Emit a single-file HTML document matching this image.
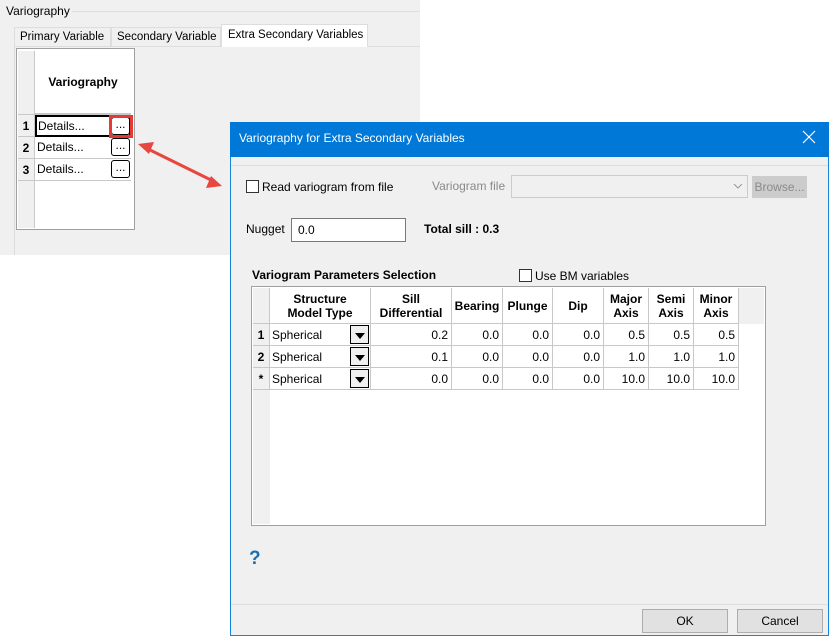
<!DOCTYPE html>
<html><head><meta charset="utf-8"><style>
*{box-sizing:border-box;margin:0;padding:0}
body{width:831px;height:642px;background:#fff;position:relative;overflow:hidden;font-family:"Liberation Sans",sans-serif;font-size:12px;color:#000}
.a{position:absolute;white-space:nowrap}
.panel{left:0;top:0;width:420px;height:255px;background:#f0f0f0}
.c{position:absolute;border-right:1px solid #c8c8c8;border-bottom:1px solid #c8c8c8;display:flex;align-items:center;white-space:nowrap}
.h{font-weight:bold;justify-content:center;text-align:center;line-height:14px;background:#fff}
.rh{background:#f0f0f0;font-weight:bold;justify-content:center}
.n{justify-content:flex-end;padding-right:3px;background:#fff}
.dd{position:absolute;width:19px;height:19px;border:1px solid #000;background:#f0f0f0}
.dd:after{content:"";position:absolute;left:4px;top:7px;border-left:5px solid transparent;border-right:5px solid transparent;border-top:6px solid #000}
.btn{position:absolute;border:1px solid #adadad;background:#e1e1e1;display:flex;align-items:center;justify-content:center}
.cb{position:absolute;width:13px;height:13px;border:1px solid #333;background:#fff}
.tab{font-size:11.5px}
</style></head><body>
<div class="a panel"></div>
<div class="a" style="left:6px;top:4px;font-size:12px">Variography</div>
<div class="a" style="left:72px;top:11px;width:348px;border-top:1px solid #ddd"></div>
<div class="a" style="left:14px;top:46px;width:406px;border-top:1px solid #ddd"></div>
<div class="a" style="left:14px;top:46px;height:209px;border-left:1px solid #ddd"></div>
<div class="a tab" style="left:14px;top:27px;width:97px;height:20px;border:1px solid #ddd;background:#f0f0f0;padding:3px 0 0 5px">Primary Variable</div>
<div class="a tab" style="left:111px;top:27px;width:110px;height:20px;border:1px solid #ddd;background:#f0f0f0;padding:3px 0 0 5px">Secondary Variable</div>
<div class="a tab" style="left:221px;top:24px;width:147px;height:23px;border:1px solid #ddd;border-bottom:none;background:#fff;padding:4px 0 0 6px">Extra Secondary Variables</div>
<div class="a" style="left:16px;top:48px;width:119px;height:182px;border:1px solid #a0a0a0;background:#fff"></div>
<div class="a" style="left:18px;top:51px;width:17px;height:177px;background:#f0f0f0;border-right:1px solid #c8c8c8"></div>
<div class="c h" style="left:35px;top:51px;width:96px;height:63px;border-right:none">Variography</div>
<div class="a" style="left:18px;top:114px;width:113px;border-top:1px solid #c8c8c8"></div>
<div class="c rh" style="left:18px;top:115px;width:17px;height:22px">1</div>
<div class="c rh" style="left:18px;top:137px;width:17px;height:22px">2</div>
<div class="c rh" style="left:18px;top:159px;width:17px;height:22px">3</div>
<div class="a" style="left:35px;top:115px;width:96px;height:22px;border:2px solid #000;padding:2px 0 0 1px">Details...</div>
<div class="a" style="left:37px;top:140px">Details...</div>
<div class="a" style="left:37px;top:162px">Details...</div>
<div class="a" style="left:35px;top:158px;width:96px;border-top:1px solid #c8c8c8"></div>
<div class="a" style="left:35px;top:180px;width:96px;border-top:1px solid #c8c8c8"></div>
<div class="a" style="left:111px;top:117px;width:19px;height:18px;border:1px solid #000;border-radius:3px;text-align:center;line-height:13px">...</div>
<div class="a" style="left:111px;top:138px;width:19px;height:18px;border:1px solid #000;border-radius:3px;text-align:center;line-height:13px">...</div>
<div class="a" style="left:111px;top:160px;width:19px;height:18px;border:1px solid #000;border-radius:3px;text-align:center;line-height:13px">...</div>
<div class="a" style="left:109px;top:115px;width:24px;height:23px;border:3px solid #e53935"></div>
<svg class="a" style="left:0;top:0" width="831" height="642"><line x1="148" y1="149" x2="213" y2="181" stroke="#e8473f" stroke-width="3"/><polygon points="138,144 154,142 149,154" fill="#e8473f"/><polygon points="222,186 206,188 211,176" fill="#e8473f"/></svg>
<!-- dialog -->
<div class="a" style="left:230px;top:122px;width:599px;height:514px;background:#f0f0f0;border:1px solid #1883d7"></div>
<div class="a" style="left:230px;top:122px;width:599px;height:35px;background:#0078d7;color:#fff;font-size:12px;padding:9px 0 0 9px">Variography for Extra Secondary Variables</div>
<svg class="a" style="left:802px;top:130px" width="14" height="14"><path d="M1 1L13 13M13 1L1 13" stroke="#fff" stroke-width="1.2"/></svg>
<div class="a" style="left:231px;top:165px;width:597px;border-top:1px solid #ddd"></div>
<div class="cb" style="left:246px;top:180px"></div>
<div class="a" style="left:262px;top:180px">Read variogram from file</div>
<div class="a" style="left:432px;top:179px;color:#8a8a8a">Variogram file</div>
<div class="a" style="left:511px;top:175px;width:237px;height:23px;border:1px solid #ccc;background:#f0f0f0"></div>
<svg class="a" style="left:733px;top:183px" width="10" height="6"><path d="M1 1L5 5L9 1" stroke="#999" fill="none"/></svg>
<div class="btn" style="left:752px;top:176px;width:55px;height:22px;border-color:#ccc;background:#ccc;color:#8a8a8a">Browse...</div>
<div class="a" style="left:246px;top:222px">Nugget</div>
<div class="a" style="left:291px;top:218px;width:115px;height:24px;border:1px solid #7a7a7a;background:#fff;padding:4px 0 0 6px">0.0</div>
<div class="a" style="left:424px;top:222px;font-weight:bold">Total sill : 0.3</div>
<div class="a" style="left:252px;top:268px;font-weight:bold">Variogram Parameters Selection</div>
<div class="cb" style="left:519px;top:269px"></div>
<div class="a" style="left:535px;top:269px">Use BM variables</div>
<div class="a" style="left:251px;top:286px;width:515px;height:240px;border:1px solid #a0a0a0;background:#fff"></div>
<div class="a" style="left:253px;top:288px;width:17px;height:236px;background:#f0f0f0"></div>
<div class="a" style="left:738px;top:288px;width:26px;height:36px;background:#f0f0f0"></div>
<div class="c h" style="left:253px;top:288px;width:17px;height:36px;background:#f0f0f0"></div>
<div class="c h" style="left:270px;top:288px;width:101px;height:36px">Structure<br>Model Type</div>
<div class="c h" style="left:371px;top:288px;width:81px;height:36px">Sill<br>Differential</div>
<div class="c h" style="left:452px;top:288px;width:51px;height:36px">Bearing</div>
<div class="c h" style="left:503px;top:288px;width:50px;height:36px">Plunge</div>
<div class="c h" style="left:553px;top:288px;width:51px;height:36px">Dip</div>
<div class="c h" style="left:604px;top:288px;width:45px;height:36px">Major<br>Axis</div>
<div class="c h" style="left:649px;top:288px;width:45px;height:36px">Semi<br>Axis</div>
<div class="c h" style="left:694px;top:288px;width:45px;height:36px">Minor<br>Axis</div>

<div class="c rh" style="left:253px;top:324px;width:17px;height:22px">1</div>
<div class="c" style="left:270px;top:324px;width:101px;height:22px;background:#fff;padding-left:2px">Spherical</div><div class="dd" style="left:350px;top:325px"></div>
<div class="c n" style="left:371px;top:324px;width:81px;height:22px">0.2</div>
<div class="c n" style="left:452px;top:324px;width:51px;height:22px">0.0</div>
<div class="c n" style="left:503px;top:324px;width:50px;height:22px">0.0</div>
<div class="c n" style="left:553px;top:324px;width:51px;height:22px">0.0</div>
<div class="c n" style="left:604px;top:324px;width:45px;height:22px">0.5</div>
<div class="c n" style="left:649px;top:324px;width:45px;height:22px">0.5</div>
<div class="c n" style="left:694px;top:324px;width:45px;height:22px">0.5</div>

<div class="c rh" style="left:253px;top:346px;width:17px;height:22px">2</div>
<div class="c" style="left:270px;top:346px;width:101px;height:22px;background:#fff;padding-left:2px">Spherical</div><div class="dd" style="left:350px;top:347px"></div>
<div class="c n" style="left:371px;top:346px;width:81px;height:22px">0.1</div>
<div class="c n" style="left:452px;top:346px;width:51px;height:22px">0.0</div>
<div class="c n" style="left:503px;top:346px;width:50px;height:22px">0.0</div>
<div class="c n" style="left:553px;top:346px;width:51px;height:22px">0.0</div>
<div class="c n" style="left:604px;top:346px;width:45px;height:22px">1.0</div>
<div class="c n" style="left:649px;top:346px;width:45px;height:22px">1.0</div>
<div class="c n" style="left:694px;top:346px;width:45px;height:22px">1.0</div>

<div class="c rh" style="left:253px;top:368px;width:17px;height:22px">*</div>
<div class="c" style="left:270px;top:368px;width:101px;height:22px;background:#fff;padding-left:2px">Spherical</div><div class="dd" style="left:350px;top:369px"></div>
<div class="c n" style="left:371px;top:368px;width:81px;height:22px">0.0</div>
<div class="c n" style="left:452px;top:368px;width:51px;height:22px">0.0</div>
<div class="c n" style="left:503px;top:368px;width:50px;height:22px">0.0</div>
<div class="c n" style="left:553px;top:368px;width:51px;height:22px">0.0</div>
<div class="c n" style="left:604px;top:368px;width:45px;height:22px">10.0</div>
<div class="c n" style="left:649px;top:368px;width:45px;height:22px">10.0</div>
<div class="c n" style="left:694px;top:368px;width:45px;height:22px">10.0</div>

<div class="a" style="left:249px;top:548px;color:#1a6fb0;font-weight:bold;font-size:19px">?</div>
<div class="a" style="left:231px;top:604px;width:597px;border-top:1px solid #ddd"></div>
<div class="btn" style="left:642px;top:609px;width:86px;height:24px">OK</div>
<div class="btn" style="left:737px;top:609px;width:86px;height:24px">Cancel</div>
</body></html>
